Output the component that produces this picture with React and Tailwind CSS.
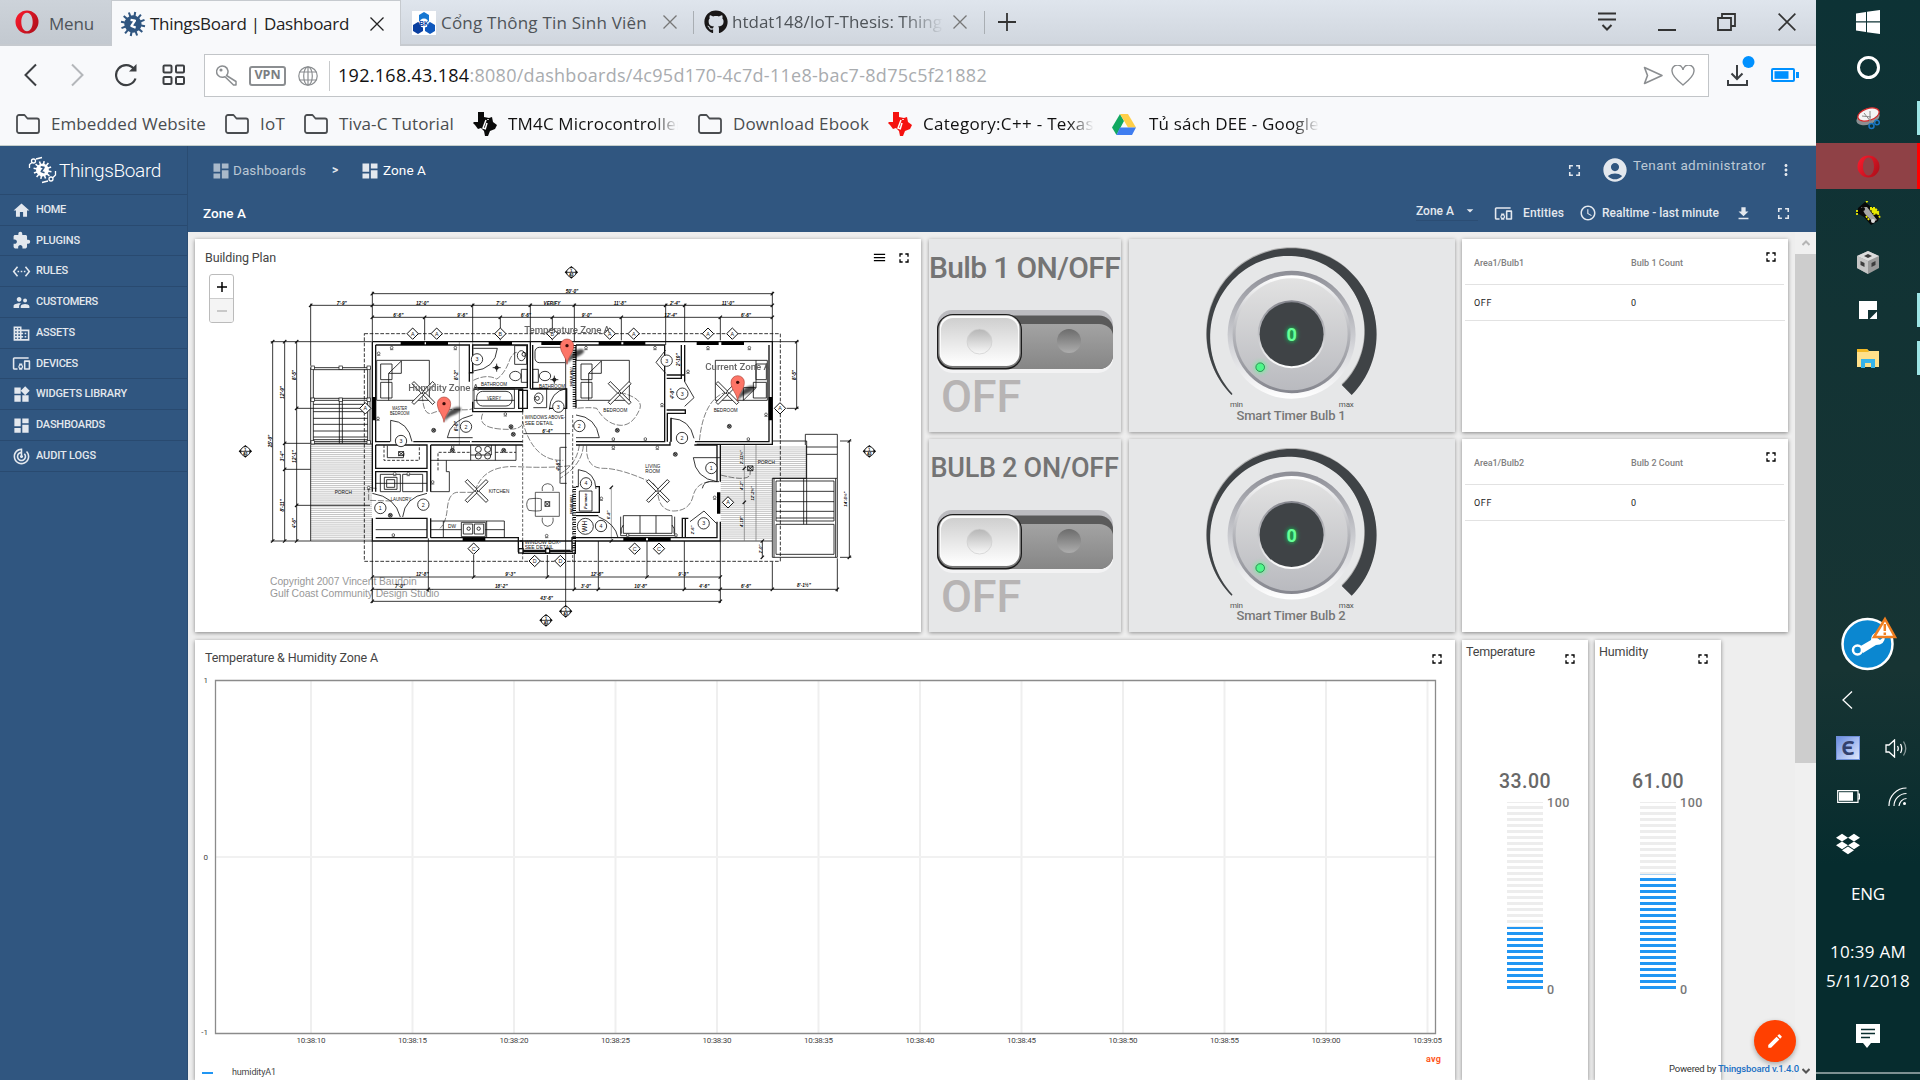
import React, { useLayoutEffect, useRef, useState } from 'react';
import {
  MdHome, MdExtension, MdSettingsEthernet, MdSupervisorAccount, MdDomain, MdDevicesOther,
  MdWidgets, MdDashboard, MdTrackChanges, MdMenu, MdFullscreen, MdAccountCircle, MdMoreVert,
  MdFileDownload, MdAccessTime, MdArrowDropDown, MdEdit,
} from 'react-icons/md';
import { FaGithub, FaDropbox } from 'react-icons/fa';

/* One line of text whose letter spacing is tuned so that it fills its box. */
function Fit({ className = '', children }) {
  const box = useRef(null);
  const inner = useRef(null);
  const [gap, setGap] = useState(0);
  useLayoutEffect(() => {
    const room = box.current.clientWidth;
    const natural = inner.current.getBoundingClientRect().width;
    const count = inner.current.textContent.length;
    setGap((room - natural) / count);
  }, []);
  return (
    <div ref={box} className={`shrink-0 whitespace-nowrap ${className}`}>
      <span ref={inner} style={{ letterSpacing: `${gap}px` }}>{children}</span>
    </div>
  );
}

const Cross = ({ className, size = 14 }) => (
  <svg className={`shrink-0 ${className}`} width={size} height={size} viewBox="0 0 14 14" stroke="currentColor" strokeWidth="1.3">
    <path d="M0.5 0.5L13.5 13.5M13.5 0.5L0.5 13.5" />
  </svg>
);

const OperaO = ({ className, size = 24 }) => (
  <svg className={`shrink-0 ${className}`} width={size} height={size} viewBox="0 0 24 24">
    <defs>
      <linearGradient id="op" x1="0" x2="1" y1="0" y2="0.600">
        <stop offset="0" stopColor="#ff1b2d" />
        <stop offset="1" stopColor="#b5101c" />
      </linearGradient>
    </defs>
    <path fillRule="evenodd" fill="url(#op)" d="M12 0.500a11.500 11.500 0 1 0 0 23a11.500 11.500 0 1 0 0-23ZM12 2.700c3.600 0 5.700 4.500 5.700 9.300s-2.100 9.300-5.700 9.300s-5.700-4.500-5.700-9.300s2.100-9.300 5.700-9.300Z" />
  </svg>
);

const Gear = ({ x = 12, y = 12, r = 8, color, mark }) => (
  <g transform={`translate(${x} ${y}) rotate(-20)`}>
    <circle r={r} fill={color} />
    {Array.from({ length: 12 }, (_, i) => (
      <rect key={i} x={-r * 0.11} y={-r * 1.42} width={r * 0.24} height={r * 0.6} fill={color} transform={`rotate(${i * 30})`} />
    ))}
    <path d={`M${-r * 0.1} ${-r * 0.55}L${r * 0.35} ${-r * 0.3}L${-r * 0.25} ${r * 0.15}L${r * 0.15} ${r * 0.5}`} fill="none" stroke={mark} strokeWidth={r * 0.26} strokeLinejoin="round" />
  </g>
);

const Folder = ({ className }) => (
  <svg className={`shrink-0 ${className}`} width="24" height="20" viewBox="0 0 24 20" fill="none" stroke="#4a4d50" strokeWidth="1.8">
    <path d="M1 3a2 2 0 0 1 2-2h5.500l3 3.500H21a2 2 0 0 1 2 2V17a2 2 0 0 1-2 2H3a2 2 0 0 1-2-2Z" strokeLinejoin="round" />
  </svg>
);

const Texas = ({ className, color }) => (
  <svg className={`shrink-0 ${className}`} width="24" height="24" viewBox="0 0 24 24">
    <path fill={color} d="M5 0h6v5l5 1l3-1l1 5l4 3l-2 4l-5 2l-2 5h-3l-1-5l-3-3l-3 1l-3-4l-2-2l1-1l4 0Z" />
    <path d="M13 8l-3 8l3 1M14 11l-1.500 5M15 7v1" fill="none" stroke="#fff" strokeWidth="1.500" />
  </svg>
);

function TabBar() {
  return (
    <div className="flex h-[46px] items-stretch border-b-2 border-[#c6cacf] bg-linear-to-b from-[#dfe5ed] to-[#d0d6de] text-[17px] text-[#4f5459]">
      <div className="flex w-[111px] shrink-0 items-center bg-linear-to-b from-[#cdd3da] to-[#c3c9d0]">
        <OperaO className="ml-[15px]" size={24} />
        <Fit className="ml-[10px] mt-[4px] w-[45px]">Menu</Fit>
      </div>
      <div className="-mb-[2px] flex w-[290px] shrink-0 items-center border-x border-t border-[#c6cacf] bg-[#f8f9fb] text-[#222]">
        <svg className="ml-[8px] shrink-0" width="26" height="26" viewBox="0 0 26 26"><Gear x={13} y={13} r={8.6} color="#305680" mark="#fff" /></svg>
        <Fit className="ml-[4px] w-[199px]">ThingsBoard | Dashboard</Fit>
        <Cross className="ml-[21px]" />
      </div>
      <svg className="ml-[11px] mt-[11px] shrink-0" width="24" height="24" viewBox="0 0 24 24">
        <rect width="24" height="24" fill="#fff" />
        <path d="M12 1l5 3v6l-5 3l-5-3V4Z" fill="#1677d2" />
        <path d="M6 11l5 3v6l-5 3l-5-3v-6Z" fill="#0a3fa0" />
        <path d="M18 11l5 3v6l-5 3l-5-3v-6Z" fill="#0f58bd" />
        <circle cx="12" cy="12" r="4.500" fill="#fff" />
        <text x="12" y="14.500" fontSize="6.500" fontWeight="bold" textAnchor="middle" fill="#0a3fa0" fontFamily="Liberation Sans">BK</text>
      </svg>
      <div className="flex items-center">
        <Fit className="ml-[5px] mt-[2px] w-[206px]">Cổng Thông Tin Sinh Viên</Fit>
        <Cross className="ml-[16px] text-[#777]" />
        <div className="ml-[16px] h-[23px] w-px bg-[#a9aeb3]" />
        <FaGithub className="ml-[10px] shrink-0 text-[#191717]" size={24} />
        <div className="ml-[4px] w-[212px] shrink-0 overflow-hidden whitespace-nowrap mask-r-from-80% mask-r-to-100%">
          <Fit className="w-[210px]">htdat148/IoT-Thesis: Thing</Fit>
        </div>
        <Cross className="ml-[9px] text-[#777]" />
        <div className="ml-[17px] h-[23px] w-px bg-[#a9aeb3]" />
        <svg className="ml-[13px] shrink-0" width="18" height="18" stroke="#333" strokeWidth="1.800"><path d="M9 0V18M0 9H18" /></svg>
      </div>
      <div className="ml-auto mr-[20px] flex items-center text-[#333]">
        <svg className="mr-[42px]" width="18" height="20" fill="none" stroke="#333" strokeWidth="2"><path d="M0 1.500H18M0 7.500H18M4.500 13L9 17.500L13.500 13" /></svg>
        <svg className="mr-[41px]" width="18" height="20" stroke="#333" strokeWidth="2"><path d="M0 18H18" /></svg>
        <svg className="mr-[42px]" width="19" height="18" fill="none" stroke="#333" strokeWidth="1.800"><path d="M1 5h13v12H1ZM5 5V1H18V13H14" /></svg>
        <Cross size={18} />
      </div>
    </div>
  );
}

function AddressBar() {
  return (
    <div className="flex h-[59px] items-center bg-[#f8f9fb] pb-[2px]">
      <svg className="ml-[23px] shrink-0" width="14" height="24" fill="none" stroke="#3c3f42" strokeWidth="2"><path d="M13 1.500L2.500 12L13 22.500" /></svg>
      <svg className="ml-[34px] shrink-0" width="14" height="24" fill="none" stroke="#b4b7ba" strokeWidth="2"><path d="M1 1.500L11.500 12L1 22.500" /></svg>
      <svg className="ml-[30px] shrink-0" width="23" height="24" viewBox="0 0 23 24" fill="none" stroke="#3c3f42" strokeWidth="2.200">
        <path d="M20.500 15.500A10 10 0 1 1 19 6" /><path d="M21.500 1v7.500H14" fill="#3c3f42" stroke="none" />
      </svg>
      <svg className="ml-[24px] shrink-0" width="24" height="22" fill="none" stroke="#3c3f42" strokeWidth="2">
        <rect x="1.500" y="1.500" width="8" height="7" rx="1" /><rect x="14" y="1.500" width="8" height="7" rx="1" />
        <rect x="1.500" y="13" width="8" height="7" rx="1" /><rect x="14" y="13" width="8" height="7" rx="1" />
      </svg>
      <div className="ml-[18px] mt-[2px] flex h-[43px] w-[1505px] shrink-0 items-center border border-[#c2c5c8] bg-white">
        <svg className="ml-[11px] shrink-0" width="21" height="21" viewBox="0 0 21 21" fill="none" stroke="#8b8e91" strokeWidth="1.500">
          <path d="M10.500 10.500a5.700 5.700 0 1 0-3.500 1.800l2-0.500l8.500 8.200h2.500v-3.500Z" strokeLinejoin="round" /><circle cx="5" cy="5" r="0.800" fill="#8b8e91" />
        </svg>
        <div className="ml-[12px] flex h-[20px] w-[37px] items-center justify-center rounded-[3px] border-2 border-[#8b8e91] text-[12.500px] font-bold text-[#7b7e81]">VPN</div>
        <svg className="ml-[12px] shrink-0" width="20" height="20" viewBox="0 0 20 20" fill="none" stroke="#8b8e91" strokeWidth="1.200">
          <circle cx="10" cy="10" r="9.200" /><ellipse cx="10" cy="10" rx="4.300" ry="9.200" /><path d="M10 1V19M1.500 6H18.500M1.500 14H18.500" />
        </svg>
        <div className="ml-[11px] h-[30px] w-px bg-[#c8cacc]" />
        <Fit className="ml-[8px] w-[649px] text-[18px] text-[#a9acaf]"><span className="text-[#111]">192.168.43.184</span>:8080/dashboards/4c95d170-4c7d-11e8-bac7-8d75c5f21882</Fit>
        <svg className="ml-auto shrink-0" width="21" height="19" fill="none" stroke="#8b8e91" strokeWidth="1.600"><path d="M1.500 1.500L19 9.500L1.500 17.500L4.500 9.500Z" strokeLinejoin="round" /></svg>
        <svg className="ml-[7px] mr-[13px] shrink-0" width="24" height="21" viewBox="0 0 24 21" fill="none" stroke="#8b8e91" strokeWidth="1.400"><path d="M12 20C7 16 1 11 1 6a5.300 5.300 0 0 1 11-1a5.300 5.300 0 0 1 11 1c0 5-6 10-11 14Z" /></svg>
      </div>
      <svg className="-mt-[6px] ml-[17px] shrink-0" width="29" height="32" viewBox="0 0 29 32" fill="none" stroke="#3c3f42" strokeWidth="2">
        <path d="M11 9V23M5.500 17.500L11 23L16.500 17.500M2 24v5h19v-5" /><circle cx="22.500" cy="6" r="6" fill="#0091ff" stroke="none" />
      </svg>
      <svg className="ml-[16px] shrink-0" width="28" height="14" fill="#0091ff"><path fillRule="evenodd" d="M2 0H22a2 2 0 0 1 2 2V12a2 2 0 0 1-2 2H2a2 2 0 0 1-2-2V2a2 2 0 0 1 2-2ZM2 2V12H22V2Z" /><rect x="3.500" y="3.200" width="14" height="7.600" /><rect x="25" y="4" width="3" height="6" /></svg>
    </div>
  );
}

function Bookmarks() {
  return (
    <div className="flex h-[41px] items-center border-b border-[#c5cfcc] bg-[#f8f9fb] pb-[2px] text-[17px] text-[#4a4d50]">
      <Folder className="ml-[16px]" /><Fit className="ml-[11px] w-[155px]">Embedded Website</Fit>
      <Folder className="ml-[19px]" /><Fit className="ml-[11px] w-[25px]">IoT</Fit>
      <Folder className="ml-[19px]" /><Fit className="ml-[11px] w-[115px]">Tiva-C Tutorial</Fit>
      <Texas className="ml-[19px]" color="#0a0a0a" />
      <div className="ml-[11px] w-[170px] shrink-0 overflow-hidden text-[#111] mask-r-from-85% mask-r-to-100%"><Fit className="w-[175px]">TM4C Microcontroller</Fit></div>
      <Folder className="ml-[20px]" /><Fit className="ml-[11px] w-[136px]">Download Ebook</Fit>
      <Texas className="ml-[19px]" color="#f5120f" />
      <div className="ml-[11px] w-[171px] shrink-0 overflow-hidden text-[#111] mask-r-from-85% mask-r-to-100%"><Fit className="w-[171px]">Category:C++ - Texas</Fit></div>
      <svg className="ml-[18px] shrink-0" width="24" height="21" viewBox="0 0 24 21">
        <path d="M8 0L12 7L4.500 21L0 13.500Z" fill="#11a861" /><path d="M8 0h8l8 13.500h-8Z" fill="#ffcf48" /><path d="M8 13.500H24L20 21H4.500Z" fill="#3f7df0" />
      </svg>
      <div className="ml-[13px] w-[170px] shrink-0 overflow-hidden text-[#111] mask-r-from-85% mask-r-to-100%"><Fit className="w-[170px]">Tủ sách DEE - Google</Fit></div>
    </div>
  );
}

const NAV = [
  ['HOME', MdHome, 'w-[30px]', 'h-[31px]'],
  ['PLUGINS', MdExtension, 'w-[44px]', 'h-[30px]'],
  ['RULES', MdSettingsEthernet, 'w-[32px]', 'h-[31px]'],
  ['CUSTOMERS', MdSupervisorAccount, 'w-[62px]', 'h-[31px]'],
  ['ASSETS', MdDomain, 'w-[39px]', 'h-[31px]'],
  ['DEVICES', MdDevicesOther, 'w-[42px]', 'h-[30px]'],
  ['WIDGETS LIBRARY', MdWidgets, 'w-[91px]', 'h-[31px]'],
  ['DASHBOARDS', MdDashboard, 'w-[69px]', 'h-[31px]'],
  ['AUDIT LOGS', MdTrackChanges, 'w-[60px]', 'h-[31px]'],
];

function Sidebar() {
  return (
    <div className="flex w-[188px] shrink-0 flex-col border-r border-[#2a4c72] bg-[#305680] text-[#e3e8ee]">
      <div className="flex h-[49px] items-center border-b border-[#294a70]">
        <svg className="ml-[28px] shrink-0" width="29" height="28" viewBox="0 0 29 28" fill="none" stroke="#fff" strokeWidth="1.300">
          <g stroke="none"><Gear x={14.5} y={14} r={6.4} color="#fff" mark="#305680" /></g>
          <path d="M1.500 12V8.500L4 6.500M8 3L14 1.500M27.500 15v4L25 21.500M20 25l-6 1.500" /><circle cx="5.500" cy="5" r="2" /><circle cx="23" cy="23" r="2" />
        </svg>
        <Fit className="ml-[2px] mt-[2px] w-[102px] text-[19px] font-light text-white">ThingsBoard</Fit>
      </div>
      {NAV.map(([label, Icon, w, h]) => (
        <div key={label} className={`flex items-center border-b border-[#294a70] ${h}`}>
          <Icon className="ml-[11.500px] shrink-0" size={19} />
          <Fit className={`-mt-px ml-[5.500px] text-[11px] leading-none font-medium ${w}`}>{label}</Fit>
        </div>
      ))}
    </div>
  );
}

function Header() {
  return (
    <div className="flex h-[86px] flex-col bg-[#305680] text-[#e3e8ee]">
      <div className="flex h-[48px] items-center">
        <MdDashboard className="ml-[23px] mt-px shrink-0 text-[#a9b9ca]" size={20} />
        <Fit className="ml-[2px] w-[73px] text-[13.500px] text-[#b9c6d4]">Dashboards</Fit>
        <Fit className="ml-[26px] w-[8px] text-[12px] font-bold">&gt;</Fit>
        <MdDashboard className="ml-[20px] mt-px shrink-0" size={20} />
        <Fit className="ml-[3px] w-[43px] text-[13.500px] text-white">Zone A</Fit>
        <MdFullscreen className="ml-auto mr-[17px]" size={19} />
        <MdAccountCircle size={28} className="mr-[4px]" />
        <Fit className="-mt-[9px] mr-[11px] w-[133px] text-[13.500px] text-[#bdc9d6]">Tenant administrator</Fit>
        <MdMoreVert className="mr-[21px]" size={18} />
      </div>
      <div className="mt-px flex h-[36px] items-center text-[12px] font-medium">
        <Fit className="ml-[15px] w-[43px] text-[13.500px] text-white">Zone A</Fit>
        <div className="-mt-[4px] ml-auto flex h-[20px] w-[62px] items-center border-b border-[#2b4d74]">
          <Fit className="w-[38px]">Zone A</Fit>
          <MdArrowDropDown className="ml-[8px]" size={17} />
        </div>
        <MdDevicesOther className="ml-[16px]" size={19} />
        <Fit className="ml-[10px] w-[41px]">Entities</Fit>
        <MdAccessTime className="ml-[15px]" size={18} />
        <Fit className="ml-[5px] w-[117px]">Realtime - last minute</Fit>
        <MdFileDownload className="ml-[16px]" size={17} />
        <MdFullscreen className="ml-[22px] mr-[23px]" size={19} />
      </div>
    </div>
  );
}

/* ---------- Building plan drawing ---------- */

const Tag = ({ x, y, t }) => (
  <g>
    <path d={`M${x} ${y - 17}L${x + 17} ${y}L${x} ${y + 17}L${x - 17} ${y}Z`} fill="#fff" strokeWidth="3" />
    <text x={x} y={y + 6} fontSize="16" textAnchor="middle" fill="#222" stroke="none">{t}</text>
  </g>
);
const Door = ({ x, y, t }) => (
  <g>
    <circle cx={x} cy={y} r="17" fill="#fff" strokeWidth="2.500" />
    <text x={x} y={y + 6} fontSize="16" textAnchor="middle" fill="#222" stroke="none">{t}</text>
  </g>
);
const Fan = ({ x, y }) => (
  <g fill="#fff" strokeWidth="2.500">
    {[45, 135, 225, 315].map((a) => <rect key={a} x="3" y="-4.500" width="41" height="9" transform={`translate(${x} ${y}) rotate(${a})`} />)}
  </g>
);
const Dim = ({ x, y, t, v, s = 14 }) => (
  <text x={x} y={y + 5} fontSize={s} fontWeight="bold" fontStyle="italic" textAnchor="middle" fill="#000" stroke="none" transform={v ? `rotate(-90 ${x} ${y})` : undefined}>{t}</text>
);
const Room = ({ x, y, w, t, s = 18 }) => (
  <text x={x} y={y} fontSize={s} textLength={w} lengthAdjust="spacingAndGlyphs" fill="#111" stroke="none">{t}</text>
);
const Section = ({ x, y }) => (
  <g>
    <path d={`M${x - 20} ${y}L${x} ${y - 19}L${x + 20} ${y}L${x} ${y + 19}Z`} fill="#000" stroke="none" />
    <circle cx={x} cy={y} r="14" fill="#fff" strokeWidth="2.500" />
    <path d={`M${x - 18} ${y}H${x + 18}`} strokeWidth="2.500" />
    <text x={x} y={y - 2} fontSize="11" fontWeight="bold" textAnchor="middle" fill="#000" stroke="none">1</text>
    <text x={x} y={y + 11} fontSize="11" fontWeight="bold" textAnchor="middle" fill="#000" stroke="none">A5</text>
  </g>
);
const Tick = ({ x, y }) => <path d={`M${x - 5} ${y + 5}L${x + 5} ${y - 5}`} strokeWidth="3.500" />;
const Outlet = ({ x, y }) => <g strokeWidth="1.800"><circle cx={x} cy={y} r="4" fill="#fff" /><path d={`M${x - 5} ${y + 6}H${x + 5}`} /></g>;
const Light = ({ x, y }) => <g strokeWidth="2"><circle cx={x} cy={y} r="6" fill="#888" /><path d={`M${x - 4} ${y - 4}l8 8M${x + 4} ${y - 4}l-8 8`} /></g>;
const Slats = ({ x1, x2, y1, y2, step = 6.2 }) => (
  <g stroke="#8d8d8d" strokeWidth="1.600">
    {Array.from({ length: Math.floor((y2 - y1) / step) + 1 }, (_, i) => <path key={i} d={`M${x1} ${y1 + i * step}H${x2}`} />)}
  </g>
);
const Pin = ({ x, y, label, lx, w }) => (
  <g stroke="none">
    <path d={`M${x + 1} ${y + 54}C${x + 3} ${y + 28} ${x + 22} ${y + 12} ${x + 42} ${y + 10}C${x + 60} ${y + 12} ${x + 50} ${y + 24} ${x + 34} ${y + 32}Q${x + 14} ${y + 38} ${x + 1} ${y + 54}Z`} fill="#000" opacity="0.700" filter="url(#soft)" />
    <path d={`M${x} ${y + 56}C${x - 3} ${y + 32} ${x - 20} ${y + 22} ${x - 20} ${y}A20 20 0 0 1 ${x + 20} ${y}C${x + 20} ${y + 22} ${x + 3} ${y + 32} ${x} ${y + 56}Z`} fill="#fd7567" stroke="#a33b31" strokeWidth="1.800" />
    <circle cx={x} cy={y} r="5" fill="#3b0b08" />
    <text x={lx} y={y - 38} fontFamily="Roboto" fontSize="29" fontWeight="500" textLength={w} fill="#555" opacity="0.900">{label}</text>
  </g>
);

function FloorPlan() {
  return (
    <svg className="block" width="726" height="393" viewBox="15 12 2178 1179" fill="none" stroke="#111" strokeWidth="3" fontFamily="Liberation Sans">
      <defs><filter id="soft" x="-30%" y="-30%" width="160%" height="160%"><feGaussianBlur stdDeviation="3" /></filter></defs>
      <g stroke="none" fill="#989898" fontSize="31">
        <text x="240" y="1050" textLength="440">Copyright 2007 Vincent Baudoin</text>
        <text x="240" y="1087" textLength="508">Gulf Coast Community Design Studio</text>
      </g>
      {/* Porches */}
      <Slats x1={362} x2={546} y1={634} y2={915} />
      <Slats x1={1592} x2={1848} y1={636} y2={730} />
      <Slats x1={1592} x2={1746} y1={736} y2={915} />
      <path d="M362 628V918H546M1592 918H1746M1849 630V730H1748" strokeWidth="2.500" />
      {/* Dimension lines */}
      <g strokeWidth="2.500">
        <path d="M547 170V320M547 176H1747M362 211H1747M547 247H1747M362 206V392M1747 170V320M848 206V320M1021 206V320M704 247V316M931 247V316M1087 247V316M1153 206V320M1294 247V316M1427 206V330M1484 206V320M1591 247V316" />
        <path d="M248 320V918M284 320V918M320 320V918M242 320H545M242 918H362M284 625H362M284 703H362M320 520H520M320 811H540" />
        <path d="M547 918V1104M715 910V1070M547 1063H1942M547 1099H1591M547 1026H1591M851 960V1026M1072 960V1026M1127 345V1130M1153 950V1063M1225 918V1063M1371 918V1026M1483 918V1063M1591 918V1104M1747 980V1063M1942 970V1070" />
        <path d="M1820 320V520M1747 320H1826M1790 520H1826M1978 618V967M1950 618H1984M1950 967H1984M1717 918V967M1110 637V745M1000 596H1140M1111 637H1130M1111 745H1130" />
        <path d="M1663 630V918M1698 630V918M1264 757V918M848 320V520M808 320V630" strokeWidth="1.800" stroke="#666" />
      </g>
      {[[547, 176], [1747, 176], [362, 211], [547, 211], [848, 211], [1021, 211], [1153, 211], [1427, 211], [1484, 211], [1747, 211], [547, 247], [704, 247], [931, 247], [1087, 247], [1294, 247], [1591, 247], [1747, 247], [248, 320], [284, 320], [320, 320], [248, 918], [284, 918], [320, 918], [284, 625], [284, 703], [320, 520], [320, 811], [547, 1026], [851, 1026], [1072, 1026], [1371, 1026], [1591, 1026], [547, 1063], [715, 1063], [1153, 1063], [1225, 1063], [1483, 1063], [1591, 1063], [1747, 1063], [1942, 1063], [547, 1099], [1591, 1099], [1820, 320], [1820, 520], [1978, 618], [1978, 967], [1717, 918], [1717, 967], [1663, 700], [1663, 802], [1264, 757], [1264, 918]].map(([x, y]) => <Tick key={`${x}-${y}`} x={x} y={y} />)}
      <path d="M523 296H1771V979H523Z" strokeDasharray="11 5" strokeWidth="2.500" />
      <path d="M998 530V980M1148 540V980" strokeDasharray="9 5" strokeWidth="2" />
      {/* Exterior and interior walls */}
      <g strokeWidth="4">
        <path d="M547 320H1747V628H1520M547 320V770M547 850V918H998V955H1156V918H1591V860M1591 740V628M557 330H838V413H848V330H1012V458H852M557 330V620H600M1021 320V462M1028 330V460H1075M557 908H711V850H557M711 770V710H557V770M557 630V700H711V630H557" />
        <path d="M722 908V850M722 630H998M722 630V770M722 908H985V950H1146V908H1581V860M1581 740V630H1513M670 620H840M848 500V530H998V462H852M986 466H1012V520H986ZM1021 462H1130V520H1078M1158 330H1424V505M1158 330V520M1158 620H1424V500M1430 430H1474V330M1484 330V440M1484 420H1430M1430 525H1486V535H1432V620M1443 620V548M1737 330V620H1515M1158 630H1440V620M1486 908V850M1477 908V850H1495M1218 755H1228V832H1158M1158 842H1225M1158 755H1165M838 413V440M838 413H850M998 620H845" />
      </g>
      <g strokeWidth="10" stroke="#000">
        <path d="M632 325H704M708 325H774M896 325H966M1054 325H1122M1226 325H1294M1300 325H1366M1520 325H1586M1594 325H1662M552 486V556M1741 486V556M818 913H886M1300 913H1368M1374 913H1442M1586 772V836" />
        <path d="M1153 330V520M1153 755V950" strokeWidth="10" strokeDasharray="3 4" />
      </g>
      <path d="M990 918H1146M995 947H1142" strokeWidth="5" />
      <rect x="986" y="941" width="13" height="13" fill="#fff" strokeWidth="4" /><rect x="1067" y="941" width="12" height="13" fill="#fff" strokeWidth="4" />
      {/* Left stair */}
      <path d="M362 398H540V625H362ZM370 404H533V620H370ZM362 490H540M362 496H540M448 490V625M457 490V625" strokeWidth="2.500" />
      <path d="M370 508H533M370 530H533M370 550H533M370 568H533M370 588H533M370 606H533M370 614H533M362 627H547" strokeWidth="2.500" />
      {[[368, 398], [452, 398], [536, 398], [368, 494], [452, 494], [536, 494], [368, 622], [536, 622]].map(([x, y]) => <rect key={`${x}-${y}`} x={x - 5} y={y - 5} width="10" height="10" fill="#fff" strokeWidth="2" />)}
      {/* Right stair */}
      <path d="M1747 730H1942V967H1747ZM1758 738H1932V858H1758ZM1758 868H1932V958H1758ZM1841 730V868M1850 730V868M1846 598H1942V658H1850M1848 636H1942M1846 598V630M1747 618H1850V730M1942 658V730" strokeWidth="2.500" />
      <path d="M1758 769H1932M1758 800H1932M1758 829H1932M1758 849H1932" strokeWidth="2.500" />
      <path d="M1752 730V967M1937 730V967" strokeWidth="2.500" />
      {/* Beds */}
      <g strokeWidth="2.500" fill="#fff">
        <path d="M560 376H718V496H560ZM572 387H606V434H572ZM572 442H606V489H572ZM596 496V415L634 378V415H596" />
        <path d="M1158 376H1318V496H1158ZM1173 387H1206V434H1173ZM1173 442H1206V489H1173ZM1196 496V415L1234 378V415H1196" />
        <path d="M1576 376H1732V496H1576ZM1698 387H1729V434H1698ZM1690 442H1729V489H1690ZM1698 376V458L1660 496V458H1698" />
      </g>
      {/* Baths */}
      <g strokeWidth="2.500">
        <rect x="852" y="462" width="121" height="58" /><rect x="860" y="469" width="106" height="44" rx="18" />
        <path d="M852 496H973" /><path d="M1125 337H1048a13 13 0 0 0-13 13V370a13 13 0 0 0 13 13H1125" />
        <path d="M974 332H1010V388H974Z" /><ellipse cx="994" cy="362" rx="12" ry="15" /><circle cx="1002" cy="358" r="6" />
        <ellipse cx="976" cy="423" rx="17" ry="14" /><path d="M994 403H1012V442H994Z" /><path d="M1028 403H1045V442H1028Z" /><ellipse cx="1065" cy="423" rx="17" ry="14" />
        <ellipse cx="1046" cy="490" rx="13" ry="16" /><circle cx="1042" cy="490" r="6" /><path d="M1070 462V518H1030" />
        <path d="M920 386v24M908 398h24M1093 422v24M1081 434h24" strokeWidth="2.500" />
        <circle cx="920" cy="398" r="5" fill="#222" /><circle cx="1093" cy="434" r="5" fill="#222" />
      </g>
      {/* Kitchen and laundry */}
      <g strokeWidth="2.500">
        <path d="M722 676H978V630M842 630V676M916 630V676M842 660H904V630M769 676V710H778V770H722" />
        <circle cx="865" cy="643" r="9" /><circle cx="893" cy="643" r="9" /><circle cx="865" cy="663" r="9" /><circle cx="893" cy="663" r="9" />
        <path d="M744 706V652H842M916 652H978" strokeDasharray="9 5" />
        <path d="M722 858H943V908M760 858V908M814 862H886V905H814ZM820 867H848V897H820ZM853 867H881V897H853ZM722 884H814M886 884H943M890 858V908" />
        <circle cx="836" cy="881" r="5" /><circle cx="866" cy="881" r="5" />
        <path d="M571 718H631V770H571ZM583 727H621V763H583ZM590 734H614V757H590ZM638 718H698V770H638ZM557 745H711M557 884H711" />
        <path d="M1036 772H1108V844H1036ZM1057 768q-4-20 16-22q20 2 16 22M1057 848q-4 22 16 26q20-4 16-26M1054 792q-10-4-38 0q-12 16 0 34q28 4 38 0Z" strokeWidth="2" />
        <path d="M1065 800h14v14h-14ZM1065 800l14 14M1079 800l-14 14M1300 842H1446V895H1300ZM1350 842V895M1398 842V895M1292 845V902H1454V845M1300 870q-10 10-6 26M1446 870q10 10 6 26" />
        <path d="M1168 768H1206V828H1168Z" />
        <path d="M582 630V676H688V630" strokeDasharray="9 5" /><path d="M592 632V668L640 668L642 655" />
        <circle cx="1186" cy="874" r="24" />
        <rect x="626" y="650" width="15" height="12" /><path d="M626 650l15 12M641 650l-15 12" />
      </g>
      {/* Door swings and wiring */}
      <g strokeWidth="2.500">
        <path d="M602 620V556Q655 560 666 620M848 540Q780 556 772 608H848M850 408Q916 402 922 340H850M1130 460Q1080 470 1078 524M1158 540Q1218 546 1228 608H1158M1443 620V550Q1500 552 1512 610M1591 668H1510Q1516 730 1581 740M547 775Q616 786 631 846M711 775Q644 786 638 846M1165 755V704Q1216 710 1218 762M1225 845Q1276 866 1284 908M1537 760q4-24 34-20h16M1427 345L1398 382L1427 415M1484 440L1512 488L1484 514M1500 860L1542 828L1580 866" />
        <path d="M697 480Q700 546 728 534T800 524T848 520M878 536Q860 576 930 582T998 560Q1030 680 1120 676M855 768Q880 690 980 695T1140 692M850 772H800Q776 776 772 820T750 880M1168 630Q1160 690 1110 716M1180 632Q1176 690 1110 730M1190 632Q1186 700 1240 700T1390 745L1402 762M1290 472Q1360 490 1350 520Q1330 570 1294 571Q1250 570 1220 520Q1200 516 1160 520M1612 470Q1540 490 1528 620M1404 780Q1410 826 1450 828Q1500 828 1510 780Q1520 744 1560 740M1592 720Q1670 740 1680 720L1681 706M850 436q40-20 70-4q24-14 40-60q10-20 20-20M560 760q-16 0-24-4V796l70 2" strokeDasharray="18 5" strokeWidth="1.600" />
      </g>
      {[[605, 338], [796, 338], [566, 355], [564, 550], [946, 537], [610, 900], [788, 636], [728, 741], [1070, 902], [1188, 338], [1395, 338], [1554, 338], [1678, 338], [1494, 409], [1416, 509], [1270, 612], [1366, 612], [1675, 612], [1270, 637], [1402, 637], [1234, 790], [1313, 900], [1458, 900], [1574, 787], [1728, 538], [655, 716], [614, 716], [536, 758]].map(([x, y]) => <Outlet key={`${x}-${y}`} x={x} y={y} />)}
      {[[731, 586], [963, 575], [970, 598], [1282, 586], [1618, 574], [1456, 658], [601, 841], [787, 646], [941, 646]].map(([x, y]) => <Light key={`${x}-${y}`} x={x} y={y} />)}
      <path d="M1673 693h16v14h-16ZM1673 693l16 14M1689 693l-16 14" strokeWidth="2.500" />
      {[[700, 474], [860, 768], [1289, 474], [1612, 474], [1404, 768]].map(([x, y]) => <Fan key={`${x}-${y}`} x={x} y={y} />)}
      {[[668, 296, 'A'], [740, 296, 'A'], [931, 296, 'B'], [1087, 296, 'B'], [1259, 296, 'A'], [1331, 296, 'A'], [1554, 296, 'A'], [1627, 296, 'A'], [526, 520, 'A'], [1770, 520, 'A'], [851, 941, 'C'], [1034, 978, 'D'], [1111, 978, 'D'], [1334, 941, 'C'], [1407, 941, 'C'], [1614, 802, 'A']].map(([x, y, t]) => <Tag key={`${x}-${y}`} x={x} y={y} t={t} />)}
      {[[861, 373, 3], [828, 575, 2], [633, 618, 3], [700, 809, 2], [571, 819, 1], [1105, 515, 3], [1168, 573, 2], [1430, 377, 3], [1477, 476, 3], [1476, 609, 2], [1564, 699, 1], [1188, 745, 4], [1233, 873, 4], [1541, 865, 3]].map(([x, y, t]) => <Door key={`${x}-${y}`} x={x} y={y} t={t} />)}
      <Dim x={455} y={204} t={'7\'-9"'} /><Dim x={697} y={204} t={'12\'-0"'} /><Dim x={934} y={204} t={'7\'-0"'} /><Dim x={1086} y={204} t="VERIFY" />
      <Dim x={1290} y={204} t={'11\'-8"'} /><Dim x={1455} y={204} t={'2\'-4"'} /><Dim x={1614} y={204} t={'11\'-0"'} /><Dim x={1146} y={168} t={'50\'-0"'} />
      <Dim x={625} y={240} t={'6\'-6"'} /><Dim x={817} y={240} t={'9\'-6"'} /><Dim x={1008} y={240} t={'6\'-6"'} /><Dim x={1190} y={240} t={'9\'-0"'} /><Dim x={1442} y={240} t={'12\'-4"'} /><Dim x={1668} y={240} t={'6\'-6"'} />
      <Dim x={697} y={1018} t={'12\'-8"'} /><Dim x={961} y={1018} t={'9\'-3"'} /><Dim x={1221} y={1018} t={'12\'-6"'} /><Dim x={1480} y={1018} t={'9\'-3"'} />
      <Dim x={630} y={1054} t={'7\'-0"'} /><Dim x={934} y={1054} t={'18\'-2"'} /><Dim x={1188} y={1054} t={'3\'-0"'} /><Dim x={1352} y={1054} t={'10\'-8"'} /><Dim x={1543} y={1054} t={'4\'-6"'} /><Dim x={1668} y={1054} t={'6\'-6"'} /><Dim x={1842} y={1052} t={'8\'-1½"'} /><Dim x={1070} y={1090} t={'43\'-6"'} />
      <Dim v x={240} y={618} t={'25\'-0"'} /><Dim v x={278} y={472} t={'12\'-9"'} /><Dim v x={314} y={420} t={'8\'-5"'} /><Dim v x={278} y={664} t={'3\'-4"'} /><Dim v x={314} y={664} t={'12\'-1"'} /><Dim v x={278} y={811} t={'8\'-11"'} /><Dim v x={314} y={864} t={'4\'-6"'} />
      <Dim v x={800} y={420} t={'8\'-2"'} /><Dim v x={800} y={574} t={'6\'-6"'} /><Dim v x={1105} y={692} t={'4\'-6"'} /><Dim x={1072} y={589} t={'6\'-4"'} />
      <Dim v x={1464} y={374} t={'2\'-10"'} /><Dim v x={1446} y={476} t={'4\'-0"'} /><Dim v x={1812} y={420} t={'8\'-5"'} /><Dim v x={1967} y={792} t={'14\'-6½"'} s={13} /><Dim v x={1654} y={666} t={'2\'-11½"'} s={12} /><Dim v x={1655} y={752} t={'4\'-2"'} s={12} /><Dim v x={1688} y={775} t={'12\'-2½"'} s={12} /><Dim v x={1655} y={860} t={'4\'-10"'} s={12} /><Dim v x={1710} y={942} t={'2\'-0"'} s={12} /><Dim v x={1256} y={840} t={'6\'-8"'} s={12} /><Dim v x={1508} y={885} t={'2\'-6"'} s={12} />
      <Dim v x={1143} y={425} t="SHEAR WALL" s={9} /><Dim v x={1143} y={808} t="SHEAR WALL" s={9} /><Dim v x={1187} y={798} t="Furnace" s={12} />
      <Room x={607} y={526} w={44} t="MASTER" s={15} /><Room x={600} y={540} w={58} t="BEDROOM" s={15} />
      <Room x={873} y={452} w={78} t="BATHROOM" s={17} /><Room x={1047} y={458} w={78} t="BATHROOM" s={17} /><Room x={891} y={496} w={42} t="VERIFY" s={16} />
      <Room x={1004} y={553} w={122} t="WINDOWS ABOVE-" /><Room x={1004} y={570} w={86} t="SEE DETAIL" />
      <Room x={1004} y={927} w={108} t="WINDOW BOX-" s={16} /><Room x={1004} y={941} w={86} t="SEE DETAIL" s={16} />
      <Room x={896} y={773} w={62} t="KITCHEN" /><Room x={434} y={777} w={52} t="PORCH" /><Room x={602} y={797} w={62} t="LAUNDRY" /><Room x={774} y={879} w={24} t="DW" s={16} />
      <Room x={1240} y={530} w={72} t="BEDROOM" /><Room x={1571} y={530} w={72} t="BEDROOM" /><Room x={1366} y={699} w={45} t="LIVING" /><Room x={1366} y={715} w={44} t="ROOM" /><Room x={1703} y={686} w={52} t="PORCH" />
      <text x="1186" y="879" transform="rotate(-90 1186 874)" fontSize="20" textAnchor="middle" fill="#111" stroke="none">WH</text>
      <Section x={1144} y={112} /><Section x={166} y={649} /><Section x={2038} y={649} /><Section x={1127} y={1129} /><Section x={1068} y={1156} />
      <Pin x={762} y={506} lx={655} w={212} label="Humidity Zone A" />
      <Pin x={1131} y={332} lx={1003} w={257} label="Temperature Zone A" />
      <Pin x={1643} y={442} lx={1546} w={194} label="Current Zone A" />
    </svg>
  );
}

function BuildingPlan() {
  return (
    <div className="relative h-[393px] w-[726px] shrink-0 bg-white shadow-[0_1px_4px_rgba(0,0,0,0.45)]">
      <FloorPlan />
      <div className="absolute inset-x-0 top-0 flex h-[37px] items-center">
        <Fit className="ml-[10px] mt-px w-[71px] text-[12.500px] text-[#444]">Building Plan</Fit>
        <MdMenu className="ml-auto" size={15} />
        <MdFullscreen className="ml-[9px] mr-[9px]" size={16} />
      </div>
      <div className="absolute left-[14px] top-[35px] flex h-[49px] w-[25px] flex-col overflow-hidden rounded-[3px] border border-[#bbb] bg-white">
        <div className="flex h-[24px] items-center justify-center border-b border-[#ccc]"><svg width="10" height="10" stroke="#000" strokeWidth="1.500"><path d="M5 0V10M0 5H10" /></svg></div>
        <div className="flex grow items-center justify-center bg-[#f4f4f4]"><svg width="10" height="2" stroke="#bbb" strokeWidth="1.500"><path d="M0 1H10" /></svg></div>
      </div>
    </div>
  );
}

function SwitchCard({ title, titleClass }) {
  return (
    <div className="flex h-[193px] w-[192px] shrink-0 flex-col bg-[#e6e7e8] font-medium shadow-[0_1px_4px_rgba(0,0,0,0.4)]">
      <Fit className={`mt-[9px] h-[40px] leading-[40px] text-[#747474] ${titleClass}`}>{title}</Fit>
      <svg className="ml-[8px] mt-[22px] shrink-0" width="176" height="63" viewBox="0 0 176 63">
        <defs>
          <linearGradient id="trk" x1="0" x2="0" y1="0" y2="1"><stop offset="0" stopColor="#a3a3a3" /><stop offset="1" stopColor="#868686" /></linearGradient>
          <linearGradient id="knb" x1="0" x2="0" y1="0" y2="1"><stop offset="0" stopColor="#cfcfcf" /><stop offset="1" stopColor="#fff" /></linearGradient>
          <linearGradient id="dimple" x1="0" x2="0" y1="0" y2="1"><stop offset="0" stopColor="#b5b5b5" /><stop offset="1" stopColor="#f8f8f8" /></linearGradient>
          <linearGradient id="dimple2" x1="0" x2="0" y1="0" y2="1"><stop offset="0" stopColor="#6c6c6c" /><stop offset="1" stopColor="#adadad" /></linearGradient>
        </defs>
        <rect width="176" height="55" rx="15" fill="#bcbcc0" />
        <rect y="8" width="176" height="55" rx="15" fill="#f3f3f4" />
        <rect y="5.500" width="176" height="53.500" rx="14" fill="#5a5a5a" />
        <path d="M14 14H162a14 12 0 0 1 14 12V45a14 14 0 0 1-14 14H14Z" fill="url(#trk)" />
        <rect y="4" width="85" height="55.500" rx="16" fill="#1c1c1c" />
        <rect x="1" y="5" width="83" height="53" rx="15" fill="#777" />
        <rect x="2.500" y="5.500" width="80" height="50.500" rx="13" fill="#fafafa" />
        <rect x="4" y="8" width="77" height="47" rx="12" fill="url(#knb)" />
        <circle cx="42.500" cy="31.500" r="12.500" fill="url(#dimple)" stroke="#d0d0d0" strokeWidth="0.800" />
        <circle cx="132" cy="31" r="12" fill="url(#dimple2)" />
      </svg>
      <Fit className="ml-[12px] mt-px w-[80px] text-[45px] leading-[46px] text-[#b7b4b4]">OFF</Fit>
    </div>
  );
}

const dialArc = (() => {
  const outer = [];
  const inner = [];
  for (let i = 0; i <= 90; i += 1) {
    const a = ((135 + i * 3) * Math.PI) / 180;
    const t = 1.5 + (i / 90) * 12.5;
    outer.push(`${(162.6 + 85 * Math.cos(a)).toFixed(2)} ${(96 + 86 * Math.sin(a)).toFixed(2)}`);
    inner.unshift(`${(162.6 + (85 - t) * Math.cos(a)).toFixed(2)} ${(96 + (86 - t) * Math.sin(a)).toFixed(2)}`);
  }
  return `M${outer.concat(inner).join('L')}Z`;
})();

function TimerCard({ title, lift }) {
  return (
    <div className="flex h-[193px] w-[326px] shrink-0 flex-col items-center bg-[#e6e7e8] shadow-[0_1px_4px_rgba(0,0,0,0.4)]">
      <svg className="shrink-0" width="326" height="170" viewBox={lift ? '0 0.8 326 170' : '0 0 326 170'} fontFamily="Roboto">
        <defs>
          <linearGradient id="ringA" x1="0" x2="0" y1="0" y2="1"><stop offset="0" stopColor="#8d8e96" /><stop offset="0.600" stopColor="#d5d6da" /><stop offset="1" stopColor="#fff" /></linearGradient>
          <linearGradient id="ringB" x1="0" x2="0" y1="0" y2="1"><stop offset="0" stopColor="#fff" /><stop offset="0.500" stopColor="#b4b5ba" /><stop offset="1" stopColor="#85868e" /></linearGradient>
          <linearGradient id="face" x1="0" x2="0" y1="0" y2="1"><stop offset="0" stopColor="#e2e2e2" /><stop offset="1" stopColor="#b9babf" /></linearGradient>
          <linearGradient id="well" x1="0" x2="0" y1="0" y2="1"><stop offset="0" stopColor="#85868e" /><stop offset="1" stopColor="#fff" /></linearGradient>
          <filter id="glow" x="-100%" y="-100%" width="300%" height="300%"><feGaussianBlur stdDeviation="2.200" /></filter>
        </defs>
        <path d={dialArc} fill="#b2b2b2" transform="translate(-0.500 -1)" />
        <path d={dialArc} fill="#3f4346" />
        <circle cx="162.600" cy="96.500" r="64" fill="url(#ringA)" />
        <circle cx="162.600" cy="96" r="59" fill="url(#ringB)" />
        <circle cx="162.600" cy="96" r="56" fill="url(#face)" />
        <circle cx="162.600" cy="96" r="34" fill="url(#well)" />
        <circle cx="162.600" cy="96" r="32" fill="#3f4346" />
        <circle cx="131.500" cy="129" r="6" fill="#5dff8f" opacity="0.700" filter="url(#glow)" />
        <circle cx="131.200" cy="129" r="4.300" fill="#4ff78a" stroke="#1d7a42" strokeWidth="0.800" />
        <text x="162.600" y="103.300" fontSize="18" fontWeight="700" textAnchor="middle" fill="#19c254" stroke="#19c254" filter="url(#glow)">0</text>
        <text x="162.600" y="103.300" fontSize="18" fontWeight="700" textAnchor="middle" fill="#66ff99">0</text>
        <text x="107.500" y="168.500" fontSize="8" textAnchor="middle" fill="#555" textLength="13">min</text>
        <text x="217.300" y="168.500" fontSize="8" textAnchor="middle" fill="#555" textLength="15">max</text>
      </svg>
      <Fit className="mr-[2px] w-[109px] text-[13px] leading-[14px] font-medium text-[#777]">{title}</Fit>
    </div>
  );
}

function TableCard({ n }) {
  return (
    <div className="flex h-[193px] w-[326px] shrink-0 flex-col bg-white px-[3px] text-[9px] shadow-[0_1px_4px_rgba(0,0,0,0.45)]">
      <div className="flex h-[46px] w-[319px] items-center border-b border-[#e2e2e2] font-medium text-[#808080]">
        <Fit className="ml-[9px] mt-[5px] w-[50px]">{`Area1/Bulb${n}`}</Fit>
        <Fit className="ml-[107px] mt-[5px] w-[52px]">{`Bulb ${n} Count`}</Fit>
        <MdFullscreen className="-mt-[9px] ml-auto mr-[5px] text-black" size={16} />
      </div>
      <div className="flex h-[36px] items-center border-b border-[#e2e2e2] pt-[2px] text-[#222]">
        <Fit className="ml-[9px] w-[18px]">OFF</Fit>
        <Fit className="ml-[139px] w-[6px]">0</Fit>
      </div>
    </div>
  );
}

const TIMES = ['10:38:10', '10:38:15', '10:38:20', '10:38:25', '10:38:30', '10:38:35', '10:38:40', '10:38:45', '10:38:50', '10:38:55', '10:39:00', '10:39:05'];

function ChartCard() {
  return (
    <div className="h-[440px] w-[1260px] shrink-0 bg-white shadow-[0_1px_4px_rgba(0,0,0,0.45)]">
      <div className="flex h-[36px] items-center">
        <Fit className="ml-[10px] w-[173px] text-[12.500px] text-[#444]">Temperature &amp; Humidity Zone A</Fit>
        <MdFullscreen className="ml-auto mr-[10px] mt-px" size={16} />
      </div>
      <svg className="block" width="1260" height="404" viewBox="195 676 1260 404" fontFamily="Roboto" fontSize="8" fill="#444">
        {TIMES.map((t, i) => (
          <g key={t}>
            <path d={`M${311 + i * 101.5} 681V1033`} stroke="#efefef" strokeWidth="2" />
            <text x={311 + i * 101.5} y="1043" textAnchor="middle" textLength="29">{t}</text>
          </g>
        ))}
        <path d="M216 857H1435" stroke="#f1f1f1" strokeWidth="2" />
        <path d="M215.500 680.500H1435.500V1033.500H215.500Z" fill="none" stroke="#8b8b8b" strokeWidth="1.300" />
        <text x="208" y="683" textAnchor="end">1</text>
        <text x="208" y="860" textAnchor="end">0</text>
        <text x="208" y="1035" textAnchor="end">-1</text>
        <text x="1426" y="1062" fontSize="9" fontWeight="700" fill="#ff5722" textLength="15">avg</text>
        <path d="M202 1073H213" stroke="#2196f3" strokeWidth="2" />
        <text x="232" y="1075" fontSize="9" textLength="44">humidityA1</text>
      </svg>
    </div>
  );
}

function GaugeCard({ title, titleClass, value, barClass, capClass }) {
  return (
    <div className="flex h-[440px] w-[126px] shrink-0 flex-col bg-white font-medium text-[#777] shadow-[0_1px_4px_rgba(0,0,0,0.45)]">
      <div className="flex h-[36px] justify-between">
        <Fit className={`ml-[4px] mt-[3px] text-[12.500px] font-normal text-[#444] ${titleClass}`}>{title}</Fit>
        <MdFullscreen className="mr-[10px] mt-[11px] text-black" size={16} />
      </div>
      <Fit className="mx-auto mt-[94px] w-[52px] text-[19.500px] leading-[24px] text-[#686868]">{value}</Fit>
      <div className="mt-[8px] flex">
        <div className="ml-[45px] flex h-[187px] w-[36px] flex-col justify-between bg-[repeating-linear-gradient(to_top,#ededed_0px,#ededed_3px,#fff_3px,#fff_6px)]">
          <div className="h-[2px]" />
          <div>
            <div className={capClass} />
            <div className={`bg-[repeating-linear-gradient(to_top,#2196f3_0px,#2196f3_3px,#fff_3px,#fff_6px)] ${barClass}`} />
          </div>
        </div>
        <div className="-mb-[7px] -mt-[6px] ml-[4px] flex flex-col justify-between text-[12.500px] leading-[13px]">
          <Fit className="w-[23px]">100</Fit>
          <Fit className="w-[8px]">0</Fit>
        </div>
      </div>
    </div>
  );
}

function Taskbar() {
  return (
    <div className="flex h-[1080px] w-[104px] shrink-0 flex-col items-stretch bg-linear-to-b from-[#0d3235] via-[#173433] via-62% to-[#062c2e] to-80% text-white">
      <div className="flex h-[44px] items-center justify-center">
        <svg width="24" height="24" fill="#fff"><path d="M0 3.500L10 2V11.300H0ZM11 1.800L24 0V11.300H11ZM0 12.500H10V22L0 20.500ZM11 12.500H24V24L11 22.200Z" /></svg>
      </div>
      <div className="flex h-[46px] items-center justify-center"><div className="h-[23px] w-[23px] rounded-full border-[3px] border-white" /></div>
      <div className="mt-[11px] flex h-[34px] items-center justify-center border-r-[3px] border-[#9de5e5]">
        <svg className="ml-[3px]" width="24" height="23" viewBox="0 0 24 23">
          <ellipse cx="12" cy="11" rx="12" ry="6.500" fill="#8b8f92" transform="rotate(-18 12 11)" />
          <ellipse cx="12.500" cy="7.500" rx="11" ry="6" fill="#f4f4f4" stroke="#d42a2a" strokeWidth="1.300" transform="rotate(-18 12.500 7.500)" />
          <path d="M8 6l7 9M14 4l0 10M6 9l9 1" stroke="#888" fill="none" />
          <circle cx="15.500" cy="19" r="2.500" fill="none" stroke="#1976c5" strokeWidth="1.500" /><circle cx="21" cy="15.500" r="2.300" fill="none" stroke="#1976c5" strokeWidth="1.500" />
        </svg>
      </div>
      <div className="mt-[8px] flex h-[46px] items-center justify-center border-r-[3px] border-[#ff0000] bg-[#8f4146]"><OperaO className="ml-[3px]" size={23} /></div>
      <div className="flex h-[49px] items-center justify-center">
        <svg width="25" height="25" viewBox="0 0 25 25">
          <path d="M2 7L9 1L24 13L22 20L15 24L8 16L1 12Z" fill="#080808" />
          <path d="M5 6l6 0l10 13l-4 2L9 13Z" fill="#a5a5a5" />
          <path d="M14 7l5 0l4 5l-5 1ZM10 15l3 4M1 9v5M22 12l2 5M10 1l2-1" fill="#e9e900" stroke="#e9e900" strokeWidth="1.800" strokeDasharray="2 1" />
          <circle cx="7" cy="8" r="2" fill="#080808" /><circle cx="17" cy="20" r="2" fill="#ddd" />
        </svg>
      </div>
      <div className="flex h-[48px] items-center justify-center">
        <svg width="22" height="23" viewBox="0 0 22 23">
          <path d="M11 0L22 5V17L11 23L0 17V5Z" fill="#9a9a9a" /><path d="M11 0L22 5L11 10L0 5Z" fill="#dcdcdc" /><path d="M0 5L11 10V23L0 17Z" fill="#c5c5c5" />
          <path d="M11 3l4 2l-4 2l-4-2ZM3.500 10l4 2v4l-4-2ZM14.500 12l4-2v4l-4 2Z" fill="#3d3d3d" />
        </svg>
      </div>
      <div className="mt-[7px] flex h-[34px] items-center justify-center border-r-[3px] border-[#9de5e5]">
        <svg className="ml-[3px]" width="18" height="18" fill="#fff"><path d="M0 0H18V9H9V18H0ZM10.500 18L18 10.500V18Z" /></svg>
      </div>
      <div className="mt-[14px] flex h-[34px] items-center justify-center border-r-[3px] border-[#9de5e5]">
        <svg className="ml-[3px]" width="22" height="19"><path d="M0 0H10L12 2H22V18H0Z" fill="#ffe08a" /><path d="M0 0H10L12 3H0Z" fill="#f2b824" /><path d="M4 19V10H18V19H14V14H8V19Z" fill="#36b3ea" /></svg>
      </div>
      <svg className="ml-[24px] mt-[240px] shrink-0" width="58" height="58" viewBox="0 0 58 58">
        <circle cx="27.500" cy="29" r="25" fill="#0b87d0" stroke="#fff" strokeWidth="2.500" />
        <path d="M19 32L31 25Q31 19 37 17L36 22L40 25L45 21Q45 30 36 30L23 38Z" fill="#fff" /><circle cx="17.500" cy="35" r="4.500" fill="#0b87d0" stroke="#fff" strokeWidth="2.500" />
        <path d="M45 4L55 22H34Z" fill="#fff" stroke="#f07f20" strokeWidth="2.500" /><path d="M44.800 9V16M44.800 17.500V20" stroke="#f07f20" strokeWidth="2.500" />
      </svg>
      <svg className="ml-[26px] mt-[18px] shrink-0" width="11" height="18" fill="none" stroke="#fff" strokeWidth="1.300"><path d="M10 0.500L1 9L10 17.500" /></svg>
      <div className="mt-[27px] flex h-[24px] shrink-0 items-center">
        <div className="ml-[20px] flex h-[24px] w-[24px] items-center justify-center border border-[#6f8fd8] bg-linear-to-br from-[#6b8de0] to-[#dfe6fb] text-[20px] leading-none font-bold text-[#32406d]">Є</div>
        <svg className="ml-[25px]" width="23" height="19" fill="none" stroke="#fff" strokeWidth="1.300"><path d="M1 6H4L9.500 1V18L4 13H1ZM12.500 7Q14 9.500 12.500 12M15.500 5Q18 9.500 15.500 14" /><path d="M18.500 2.500Q23 9.500 18.500 16.500" opacity="0.500" /></svg>
      </div>
      <div className="mt-[24px] flex h-[24px] shrink-0 items-center">
        <svg className="ml-[21px]" width="23" height="13"><path d="M0.700 0.700H21V12.300H0.700ZM21 4H22.500V9H21" fill="none" stroke="#fff" strokeWidth="1.200" /><rect x="2" y="2.200" width="14" height="8.600" fill="#fff" /></svg>
        <svg className="ml-[28px]" width="19" height="19" fill="none" stroke="#fff" strokeWidth="1.200"><path d="M1 19A17.500 17.500 0 0 1 18.500 1M6 19A12.500 12.500 0 0 1 18.500 6.500M11 19A8 8 0 0 1 18.500 11.500" /><circle cx="16.500" cy="16.500" r="1.500" fill="#fff" stroke="none" /></svg>
      </div>
      <FaDropbox className="ml-[20px] mt-[24px] shrink-0" size={24} />
      <Fit className="mx-auto mt-[26px] w-[34px] text-[17px] leading-[24px]">ENG</Fit>
      <Fit className="mx-auto mt-[34px] w-[76px] text-[17px] leading-[24px]">10:39 AM</Fit>
      <Fit className="mx-auto mt-[5px] w-[84px] text-[17px] leading-[24px]">5/11/2018</Fit>
      <svg className="mx-auto mt-[31px] shrink-0" width="24" height="24"><path d="M0 0H24V19H15L11 24L7 19H0Z" fill="#fff" /><path d="M5 5.500H19M5 9.500H19M5 13.500H14" stroke="#0a2d2f" strokeWidth="1.300" /></svg>
      <div className="mt-[24px] h-[2px] shrink-0 bg-[#7d9192]" />
    </div>
  );
}

export default function App() {
  return (
    <div className="flex h-[1080px] w-[1920px] overflow-hidden font-['Open_Sans','Noto_Sans',sans-serif]">
      <div className="flex w-[1816px] shrink-0 flex-col">
        <TabBar />
        <AddressBar />
        <Bookmarks />
        <div className="flex h-[934px] font-['Roboto',sans-serif]">
          <Sidebar />
          <div className="flex grow flex-col">
            <Header />
            <div className="relative flex h-[848px] bg-[#eeeeee]">
              <div className="w-[1607px] pl-[7px] pt-[7px]">
                <div className="flex">
                  <BuildingPlan />
                  <div className="ml-[8px] flex flex-col gap-[7px]">
                    <div className="flex">
                      <SwitchCard title="Bulb 1 ON/OFF" titleClass="w-[191px] text-[30px]" />
                      <div className="w-[8px]" /><TimerCard title="Smart Timer Bulb 1" lift /><div className="w-[7px]" /><TableCard n={1} />
                    </div>
                    <div className="flex">
                      <SwitchCard title="BULB 2 ON/OFF" titleClass="w-[188px] text-[27px] ml-[1.5px]" />
                      <div className="w-[8px]" /><TimerCard title="Smart Timer Bulb 2" /><div className="w-[7px]" /><TableCard n={2} />
                    </div>
                  </div>
                </div>
                <div className="mt-[8px] flex gap-[7px]">
                  <ChartCard />
                  <GaugeCard title="Temperature" titleClass="w-[69px]" value="33.00" barClass="h-[57px]" capClass="mb-[3px] h-[2px] bg-[#2196f3]" />
                  <GaugeCard title="Humidity" titleClass="w-[49px]" value="61.00" barClass="h-[111px]" capClass="mb-[3px] h-[1px] bg-[#a9d3f6]" />
                </div>
              </div>
              <div className="ml-auto flex w-[21px] flex-col items-center bg-[#f0f0f0]">
                <svg className="mt-[8px] shrink-0" width="8" height="6" fill="none" stroke="#b5b5b5" strokeWidth="2"><path d="M0.500 5L4 1.500L7.500 5" /></svg>
                <div className="mt-[8px] h-[509px] w-full bg-[#cdcdcd]" />
                <svg className="mb-[6px] mt-auto shrink-0" width="8" height="6" fill="none" stroke="#555" strokeWidth="2"><path d="M0.500 1L4 4.500L7.500 1" /></svg>
              </div>
              <div className="absolute bottom-[18px] right-[20px] flex h-[42px] w-[42px] items-center justify-center rounded-full bg-[#ff4001] text-white shadow-[0_2px_5px_rgba(0,0,0,0.3)]"><MdEdit size={18} /></div>
              <div className="absolute bottom-[4px] right-[17px] flex text-[9.500px] leading-[14px] text-[#333]">
                <Fit className="w-[47px]">Powered by</Fit>
                <Fit className="ml-[2px] w-[81px] font-medium text-[#1b70c4]">Thingsboard v.1.4.0</Fit>
              </div>
            </div>
          </div>
        </div>
      </div>
      <Taskbar />
    </div>
  );
}
